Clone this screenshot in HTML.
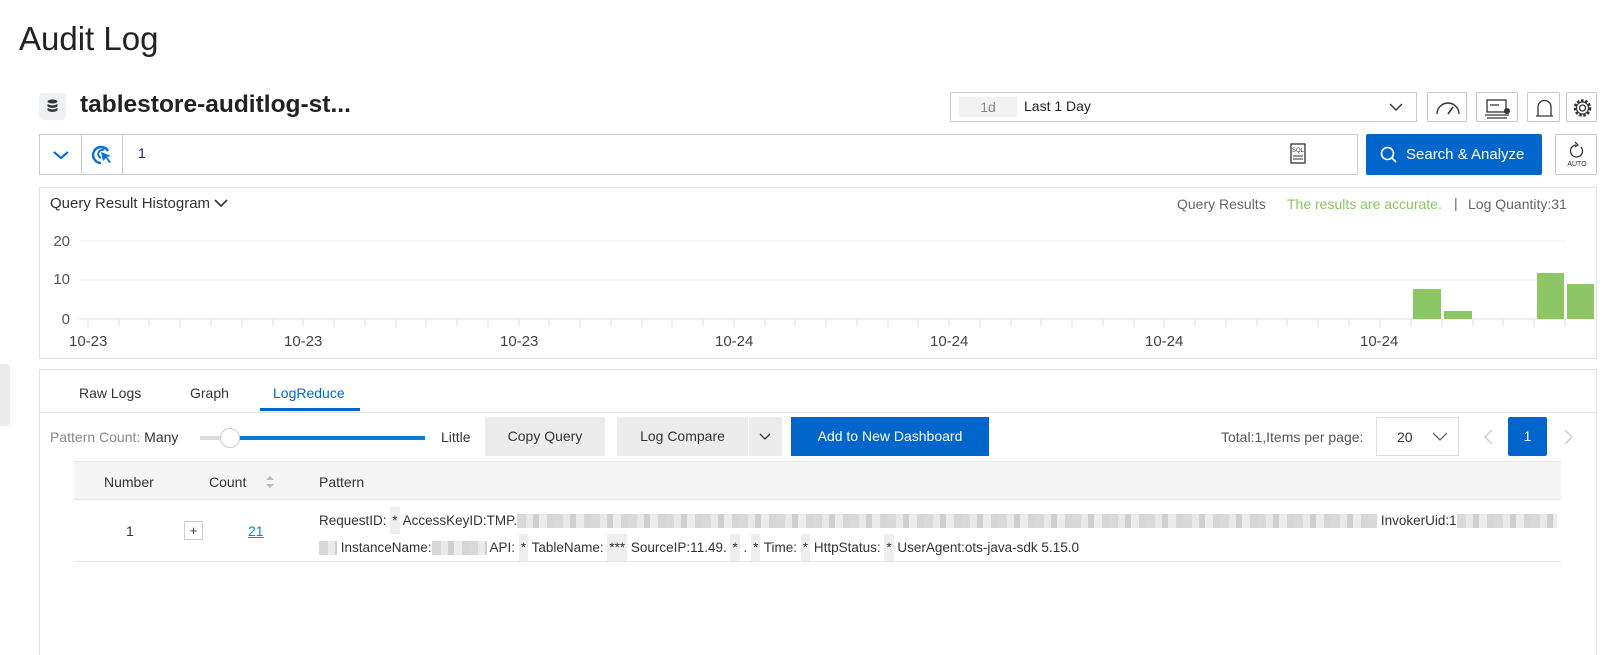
<!DOCTYPE html>
<html style="height:655px;overflow:hidden"><head><meta charset="utf-8"><style>
*{box-sizing:border-box;margin:0;padding:0}
body{width:1622px;height:655px;background:#fff;font-family:"Liberation Sans",sans-serif;color:#333;position:relative;overflow:hidden;font-size:14px}
.a{position:absolute}
.box{position:absolute;border:1px solid #d8d8d8;background:#fff}
.ib{position:absolute;border:1px solid #c8c8c8;border-radius:2px;background:#fff}
.blur{display:inline-block;height:14px;background:repeating-linear-gradient(90deg,#d9d9d9 0 9px,#e9e9e9 9px 16px,#cfcfcf 16px 22px,#ececec 22px 30px,#d6d6d6 30px 37px);vertical-align:middle}
.tk{display:inline-block;background:#eee;padding:0 2px}
</style></head><body>
<div class="a" style="left:19px;top:20px;font-size:33px;color:#222">Audit Log</div>
<div class="a" style="left:39px;top:93px;width:27px;height:27px;background:#eef0f3;border-radius:4px">
<svg width="27" height="27" viewBox="0 0 27 27"><g fill="#333"><ellipse cx="13.5" cy="8.5" rx="5" ry="2"/><path d="M8.5 11q5 3 10 0v2.5q-5 3-10 0z"/><path d="M8.5 15q5 3 10 0v2.5q-5 3-10 0z"/></g></svg></div>
<div class="a" style="left:80px;top:91px;font-size:24.5px;font-weight:bold;color:#222">tablestore-auditlog-st...</div>

<div class="box" style="left:950px;top:92px;width:467px;height:30px;border-color:#ccc">
<div class="a" style="left:8px;top:4px;width:58px;height:20px;background:#f2f2f2;color:#888;text-align:center;line-height:20px">1d</div>
<div class="a" style="left:73px;top:5px;color:#222">Last 1 Day</div>
<svg class="a" style="left:438px;top:9px" width="14" height="10"><path d="M1 2l6 6 6-6" stroke="#333" fill="none" stroke-width="1.4"/></svg></div>
<div class="ib" style="left:1427px;top:92px;width:40px;height:30px"><svg width="40" height="30"><path d="M9 21a11 11 0 0 1 22 0" stroke="#333" fill="none" stroke-width="1.4"/><path d="M20 21l5-7" stroke="#333" stroke-width="1.6"/></svg></div>
<div class="ib" style="left:1476px;top:92px;width:42px;height:30px"><svg width="42" height="30"><rect x="10" y="7" width="19" height="12" stroke="#333" fill="none" stroke-width="1.3"/><path d="M13 12h9M8 22h24M10 25h20" stroke="#333" stroke-width="1.3"/><circle cx="30" cy="18" r="3" fill="#333"/></svg></div>
<div class="ib" style="left:1527px;top:92px;width:33px;height:30px"><svg width="33" height="30"><path d="M10 23V14a6.5 6.5 0 0 1 13 0v9zM8 23h17" stroke="#333" fill="none" stroke-width="1.3"/></svg></div>
<div class="ib" style="left:1566px;top:92px;width:31px;height:30px"><svg width="31" height="30"><circle cx="15.5" cy="15" r="3" stroke="#333" fill="none" stroke-width="1.3"/><circle cx="15.5" cy="15" r="7.5" stroke="#333" fill="none" stroke-width="2.6" stroke-dasharray="2.5 1.7"/><circle cx="15.5" cy="15" r="6" stroke="#333" fill="none" stroke-width="1.2"/></svg></div>

<div class="box" style="left:39px;top:134px;width:1319px;height:41px;border-color:#ccc">
<div class="a" style="left:0;top:0;width:42px;height:39px;border-right:1px solid #ccc"><svg width="42" height="39"><path d="M14 17l7 6 7-6" stroke="#0066cc" fill="none" stroke-width="2"/></svg></div>
<div class="a" style="left:42px;top:0;width:41px;height:39px;border-right:1px solid #ccc"><svg width="41" height="39"><path d="M26 16a8 8 0 1 0-7 12" stroke="#0a6fd6" fill="none" stroke-width="2.4"/><path d="M22 15a4 4 0 1 0-3 8" stroke="#0a6fd6" fill="none" stroke-width="2"/><path d="M19 17l10 4-4 1 4 5-2 1-3-5-3 3z" fill="#0a6fd6"/></svg></div>
<div class="a" style="left:98px;top:10px;color:#1a1a80">1</div>
<svg class="a" style="left:1248px;top:8px" width="20" height="22"><rect x="3" y="1" width="14" height="19" stroke="#333" fill="none" stroke-width="1.3"/><text x="10" y="9" font-size="6" text-anchor="middle" font-family="Liberation Sans" fill="#333">SQL</text><path d="M5 13h10M5 16h10" stroke="#333"/></svg></div>
<div class="a" style="left:1366px;top:134px;width:176px;height:41px;background:#0066cc;border-radius:2px;color:#fff;font-size:15px;line-height:41px;padding-left:40px">Search &amp; Analyze
<svg class="a" style="left:14px;top:12px" width="18" height="18"><circle cx="7.5" cy="7.5" r="6" stroke="#fff" fill="none" stroke-width="1.6"/><path d="M12 12l4 4" stroke="#fff" stroke-width="1.6"/></svg></div>
<div class="ib" style="left:1555px;top:134px;width:42px;height:41px"><svg width="42" height="41"><path d="M25 12a6 6 0 1 1-5-2" stroke="#333" fill="none" stroke-width="1.3"/><path d="M19 7l3 3-3 2" stroke="#333" fill="none" stroke-width="1.3"/><text x="21" y="31" font-size="7" text-anchor="middle" font-family="Liberation Sans" fill="#333">AUTO</text></svg></div>

<div class="box" style="left:39px;top:187px;width:1558px;height:172px;border-color:#e2e2e2">
<div class="a" style="left:10px;top:7px;font-size:15px;color:#333">Query Result Histogram <svg width="14" height="10"><path d="M1 2l6 6 6-6" stroke="#333" fill="none" stroke-width="1.6"/></svg></div>
<div class="a" style="left:1137px;top:8px;color:#666">Query Results</div>
<div class="a" style="left:1247px;top:8px;color:#8ac65e">The results are accurate.</div>
<div class="a" style="left:1414px;top:7px;color:#666">|</div>
<div class="a" style="left:1428px;top:8px;color:#666">Log Quantity:31</div>
</div>
<svg class="a" style="left:40px;top:225px" width="1556" height="130">
<g font-family="Liberation Sans" font-size="15" fill="#555" text-anchor="end"><text x="30" y="21">20</text><text x="30" y="59">10</text><text x="30" y="99">0</text></g>
<path d="M39 16H1527M39 55H1527" stroke="#ececec"/><path d="M39 94H1527" stroke="#ddd"/>
<g fill="#8cc665"><rect x="1373" y="64" width="28" height="30"/><rect x="1404" y="86" width="28" height="8"/><rect x="1497" y="48" width="27" height="46"/><rect x="1527" y="59" width="27" height="35"/></g>
<g stroke="#ddd">
<path d="M48 94v8M79 94v8M109 94v8M140 94v8M171 94v8M202 94v8M233 94v8M263 94v8M294 94v8M325 94v8M356 94v8M386 94v8M417 94v8M448 94v8M479 94v8M509 94v8M540 94v8M571 94v8M602 94v8M632 94v8M663 94v8M694 94v8M725 94v8M755 94v8M786 94v8M817 94v8M848 94v8M878 94v8M909 94v8M940 94v8M971 94v8M1001 94v8M1032 94v8M1063 94v8M1094 94v8M1124 94v8M1155 94v8M1186 94v8M1217 94v8M1247 94v8M1278 94v8M1309 94v8M1340 94v8M1371 94v8M1402 94v8M1433 94v8M1463 94v8M1494 94v8M1525 94v8"/></g>
<g font-family="Liberation Sans" font-size="15" fill="#444"><text x="29" y="121">10-23</text><text x="244" y="121">10-23</text><text x="460" y="121">10-23</text><text x="675" y="121">10-24</text><text x="890" y="121">10-24</text><text x="1105" y="121">10-24</text><text x="1320" y="121">10-24</text></g>
</svg>

<div class="a" style="left:0;top:364px;width:10px;height:62px;background:#ececec;border-radius:0 4px 4px 0"></div>
<div class="box" style="left:39px;top:369px;width:1558px;height:286px;border-color:#e2e2e2;border-bottom:none"></div>
<div class="a" style="left:79px;top:385px;font-size:14px">Raw Logs</div>
<div class="a" style="left:190px;top:385px;font-size:14px">Graph</div>
<div class="a" style="left:273px;top:385px;font-size:14px;color:#0066cc">LogReduce</div>
<div class="a" style="left:40px;top:412px;width:1556px;height:1px;background:#e2e2e2"></div>
<div class="a" style="left:260px;top:408px;width:100px;height:3px;background:#0066cc"></div>

<div class="a" style="left:50px;top:429px;color:#888">Pattern Count: <span style="color:#333">Many</span></div>
<div class="a" style="left:200px;top:436px;width:40px;height:4px;background:#ddd"></div>
<div class="a" style="left:230px;top:436px;width:195px;height:4px;background:#0a7bd6"></div>
<div class="a" style="left:220px;top:428px;width:20px;height:20px;border-radius:50%;background:#fff;border:1px solid #ccc"></div>
<div class="a" style="left:441px;top:429px;color:#333">Little</div>
<div class="a" style="left:485px;top:417px;width:120px;height:39px;background:#ececec;text-align:center;line-height:39px">Copy Query</div>
<div class="a" style="left:617px;top:417px;width:131px;height:39px;background:#ececec;text-align:center;line-height:39px">Log Compare</div>
<div class="a" style="left:749px;top:417px;width:33px;height:39px;background:#ececec"><svg width="33" height="39"><path d="M11 17l5 5 5-5" stroke="#333" fill="none" stroke-width="1.3"/></svg></div>
<div class="a" style="left:791px;top:417px;width:198px;height:39px;background:#0066cc;color:#fff;text-align:center;line-height:39px">Add to New Dashboard</div>
<div class="a" style="left:1221px;top:429px;color:#555">Total:1,Items per page:</div>
<div class="box" style="left:1376px;top:417px;width:83px;height:39px;border-color:#ddd"><span class="a" style="left:20px;top:11px">20</span><svg class="a" style="left:55px;top:14px" width="16" height="10"><path d="M1 1l7 7 7-7" stroke="#666" fill="none" stroke-width="1.3"/></svg></div>
<svg class="a" style="left:1483px;top:428px" width="12" height="18"><path d="M9 2L2 9l7 7" stroke="#ccc" fill="none" stroke-width="1.4"/></svg>
<div class="a" style="left:1508px;top:417px;width:39px;height:39px;background:#0066cc;border-radius:2px;color:#fff;text-align:center;line-height:39px">1</div>
<svg class="a" style="left:1562px;top:428px" width="12" height="18"><path d="M3 2l7 7-7 7" stroke="#ccc" fill="none" stroke-width="1.4"/></svg>

<div class="a" style="left:74px;top:461px;width:1487px;height:1px;background:#e5e5e5"></div>
<div class="a" style="left:74px;top:462px;width:1487px;height:38px;background:#f5f5f5;border-bottom:1px solid #e5e5e5"></div>
<div class="a" style="left:104px;top:474px">Number</div>
<div class="a" style="left:209px;top:474px">Count</div>
<svg class="a" style="left:264px;top:474px" width="12" height="16"><path d="M2 6l4-4 4 4zM2 10l4 4 4-4z" fill="#bbb"/></svg>
<div class="a" style="left:319px;top:474px">Pattern</div>
<div class="a" style="left:126px;top:523px">1</div>
<div class="a" style="left:184px;top:521px;width:19px;height:19px;border:1px solid #ccc;text-align:center;line-height:17px;font-size:13px">+</div>
<div class="a" style="left:248px;top:523px;color:#0a88c8;text-decoration:underline">21</div>
<div class="a" style="left:319px;top:507px;white-space:nowrap;line-height:27px;font-size:13.5px">RequestID: <span class="tk">*</span> AccessKeyID:TMP.<span class="blur" style="width:860px"></span> InvokerUid:1<span class="blur" style="width:100px"></span><br><span class="blur" style="width:18px"></span> InstanceName:<span class="blur" style="width:55px"></span> API: <span class="tk">*</span> TableName: <span class="tk">***</span> SourceIP:11.49. <span class="tk">*</span> . <span class="tk">*</span> Time: <span class="tk">*</span> HttpStatus: <span class="tk">*</span> UserAgent:ots-java-sdk 5.15.0</div>
<div class="a" style="left:74px;top:561px;width:1487px;height:1px;background:#e5e5e5"></div>
</body></html>
